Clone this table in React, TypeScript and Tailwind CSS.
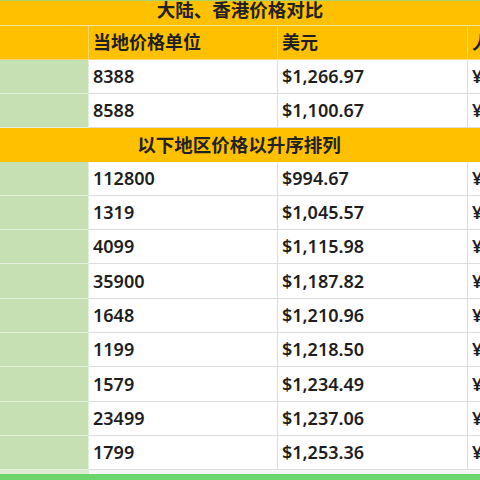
import React from "react";

const rows1 = [
  { a: "8388", b: "$1,266.97" },
  { a: "8588", b: "$1,100.67" },
];

const rows2 = [
  { a: "112800", b: "$994.67", h: 34 },
  { a: "1319", b: "$1,045.57", h: 34 },
  { a: "4099", b: "$1,115.98", h: 34 },
  { a: "35900", b: "$1,187.82", h: 35 },
  { a: "1648", b: "$1,210.96", h: 34 },
  { a: "1199", b: "$1,218.50", h: 34 },
  { a: "1579", b: "$1,234.49", h: 35 },
  { a: "23499", b: "$1,237.06", h: 34 },
  { a: "1799", b: "$1,253.36", h: 34 },
];

function DataRow({ a, b, h }: { a: string; b: string; h: number }) {
  return (
    <div className="flex shrink-0" style={{ height: h }}>
      <div className="w-[89px] shrink-0 bg-[#c6e0b4] border-r border-b border-[#e3f0da]" />
      <div className="w-[189px] shrink-0 flex items-center pl-[4px] border-r border-b border-[#dedede] bg-white">
        {a}
      </div>
      <div className="w-[190px] shrink-0 flex items-center pl-[4px] border-r border-b border-[#dedede] bg-white">
        {b}
      </div>
      <div className="flex-1 flex items-center pl-[4px] border-b border-[#dedede] bg-white overflow-hidden whitespace-nowrap">
        ¥
      </div>
    </div>
  );
}

export default function App() {
  return (
    <div
      className="w-[480px] h-[480px] overflow-hidden bg-white flex flex-col text-[18px] text-[#1e1e1e] font-semibold"
      style={{ fontFamily: '"Noto Sans", "Noto Sans CJK SC", sans-serif' }}
    >
      <div className="h-[1px] shrink-0 bg-[#a9d46c]" />
      <div className="h-[24px] shrink-0 bg-[#ffc000] flex items-center justify-center pb-[6px] text-[18.5px] font-bold text-[#222] leading-[18px]">
        大陆、香港价格对比
      </div>
      <div className="h-[1px] shrink-0 bg-[#fde48f]" />
      <div className="flex h-[34px] shrink-0 bg-[#ffc000]">
        <div className="w-[89px] shrink-0 border-r border-b border-[#fcd76a]" />
        <div className="w-[189px] shrink-0 flex items-center pl-[4px] border-r border-b border-[#fcd76a]">
          当地价格单位
        </div>
        <div className="w-[190px] shrink-0 flex items-center pl-[4px] border-r border-b border-[#fcd76a]">
          美元
        </div>
        <div className="flex-1 flex items-center pl-[4px] border-b border-[#fcd76a] overflow-hidden whitespace-nowrap">
          人民币
        </div>
      </div>
      {rows1.map((r) => (
        <DataRow key={r.a} a={r.a} b={r.b} h={34} />
      ))}
      <div className="h-[34px] shrink-0 bg-[#ffc000] flex items-center justify-center text-[18.5px] font-bold text-[#222] pr-[2px]">
        以下地区价格以升序排列
      </div>
      {rows2.map((r) => (
        <DataRow key={r.a} a={r.a} b={r.b} h={r.h} />
      ))}
      <div className="flex h-[4px] shrink-0">
        <div className="w-[89px] shrink-0 bg-[#dcebd2]" />
        <div className="flex-1 bg-[#f6f6f6]" />
      </div>
      <div className="flex-1 bg-[#6dd46b]" />
    </div>
  );
}
